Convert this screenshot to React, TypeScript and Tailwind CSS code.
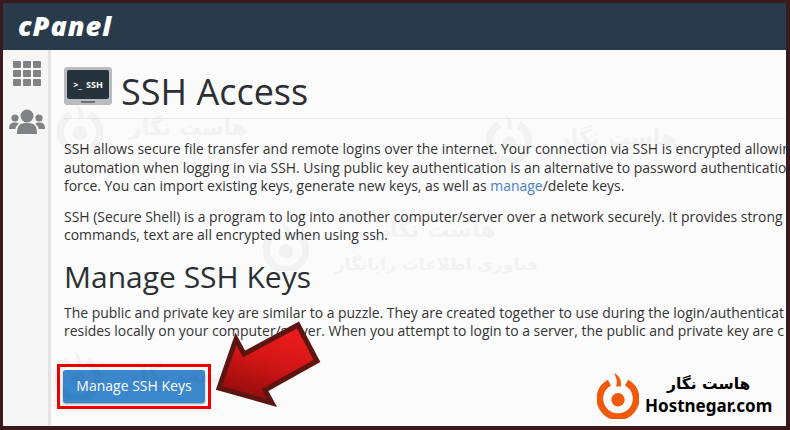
const sans = 'font-["Open_Sans",sans-serif]';

function Ring({ color }: { color: string }) {
  return (
    <svg viewBox="0 0 44 48" className="h-full w-full">
      <path d="M13 11 A19 19 0 1 0 31 11" fill="none" stroke={color} strokeWidth="7" />
      <path d="M18 1 C23 4 26 8 25 15 L20 15 C22 10 20 6 18 1 Z" fill={color} />
      <circle cx="22" cy="29" r="7" fill={color} />
    </svg>
  );
}

function Watermark({ className, tagline }: { className: string; tagline?: boolean }) {
  return (
    <div className={`pointer-events-none absolute flex items-center gap-[26px] opacity-[0.03] ${className}`}>
      <div className="h-[50px] w-[46px]">
        <Ring color="#000" />
      </div>
      <div className='flex flex-col items-center gap-[12px] font-["DejaVu_Sans",sans-serif] whitespace-nowrap'>
        <span className="text-[22px] leading-[24px] font-bold">هاست نگار</span>
        {tagline && <span className="text-[17px] leading-[20px] font-bold">فناوری اطلاعات رایانگار</span>}
      </div>
    </div>
  );
}

function SshIcon() {
  return (
    <div className="flex h-[38px] w-12 shrink-0 flex-col items-center rounded-[3px] bg-[#b9bcbe] px-[3px] pt-[3px]">
      <div className="flex h-[29px] w-full items-center justify-center gap-[4px] rounded-[2px] bg-[#26323c] text-[9px] leading-none font-bold text-white">
        <span>&gt;_</span>
        <span>SSH</span>
      </div>
      <div className="mt-[2px] h-[2px] w-[14px] bg-[#6f7376]" />
    </div>
  );
}

export default function App() {
  return (
    <div className={`relative flex h-[430px] w-[790px] flex-col overflow-hidden border-[3px] border-r-[4px] border-b-[4px] border-[#3a1a1a] bg-[#fbfbfb] ${sans}`}>
      <header className="flex h-[47px] shrink-0 items-center bg-[#293a4a] pb-[3px] pl-[15px]">
        <span className="text-[27px] leading-none font-extrabold tracking-[1px] text-white italic">cPanel</span>
      </header>

      <div className="flex min-h-0 flex-1">
        <aside className="flex w-[48px] shrink-0 flex-col items-center gap-[23px] border-r-[3px] border-[#e4e4e4] bg-[#f6f6f6] pt-[11px] pl-[2px]">
          <div className="grid grid-cols-3 gap-[2px]">
            {Array.from({ length: 9 }).map((_, i) => (
              <div key={i} className="h-[7px] w-[8px] rounded-[1px] bg-[#808285]" />
            ))}
          </div>
          <svg viewBox="0 0 36 26" className="h-[26px] w-[36px]" fill="#808285">
            <circle cx="18" cy="7" r="6.5" />
            <path d="M8 25 C8 16 11 14 18 14 C25 14 28 16 28 25 Z" />
            <circle cx="6" cy="9" r="3.6" />
            <circle cx="30" cy="9" r="3.6" />
            <path d="M0 20 C0 15 2 13.5 6 13.5 C8 13.5 9 14 9.5 15 C7.5 16.5 6.5 18 6.5 20 Z" />
            <path d="M36 20 C36 15 34 13.5 30 13.5 C28 13.5 27 14 26.5 15 C28.5 16.5 29.5 18 29.5 20 Z" />
          </svg>
        </aside>

        <main className="min-w-0 flex-1 overflow-hidden pl-[13px] text-[13.95px] leading-[18.5px] whitespace-nowrap text-[#333]">
          <div className="flex h-[69px] items-start gap-[9px] border-b border-[#ececec] pt-[17px]">
            <SshIcon />
            <h1 className="mt-[7px] text-[36px] leading-none text-[#2c2f33]">SSH Access</h1>
          </div>

          <p className="mt-[21px]">SSH allows secure file transfer and remote logins over the internet. Your connection via SSH is encrypted allowing</p>
          <p>automation when logging in via SSH. Using public key authentication is an alternative to password authentication</p>
          <p>
            force. You can import existing keys, generate new keys, as well as <span className="text-[#4a80c4]">manage</span>/delete keys.
          </p>

          <p className="mt-[12px]">SSH (Secure Shell) is a program to log into another computer/server over a network securely. It provides strong</p>
          <p>commands, text are all encrypted when using ssh.</p>

          <h2 className="mt-[12px] text-[30px] leading-[40px] text-[#2c2f33]">Manage SSH Keys</h2>

          <p className="mt-[7px]">The public and private key are similar to a puzzle. They are created together to use during the login/authenticat</p>
          <p>resides locally on your computer/server. When you attempt to login to a server, the public and private key are c</p>

          <div className="mt-[23px] ml-[-7px] w-fit border-[3px] border-[#f00000] p-[3px]">
            <button className="block h-[33px] w-[142px] rounded-[3px] bg-[#3a87cd] text-[14px] text-white shadow-[0_1px_2px_#999]">Manage SSH Keys</button>
          </div>
        </main>
      </div>

      <Watermark className="top-[100px] left-[54px]" />
      <Watermark className="top-[110px] left-[483px]" />
      <Watermark className="top-[215px] left-[260px]" tagline />
      <Watermark className="top-[347px] left-[52px]" />

      <svg viewBox="0 0 110 90" className="absolute top-[317px] left-[212px] h-[90px] w-[110px]">
        <defs>
          <linearGradient id="arrowFill" x1="0.7" y1="0" x2="0.35" y2="1">
            <stop offset="0" stopColor="#ee1c1c" />
            <stop offset="0.45" stopColor="#d51616" />
            <stop offset="1" stopColor="#8f0c0c" />
          </linearGradient>
        </defs>
        <path
          d="M4 68 L21 19 L29 34 L83 5 L102 41 L50 70 L57 83 Z"
          fill="url(#arrowFill)"
          stroke="#5c1510"
          strokeWidth="5"
          strokeLinejoin="miter"
        />
      </svg>

      <div className="absolute top-[368px] left-[594px] flex items-center gap-[6px]">
        <div className="h-[48px] w-[42px]">
          <Ring color="#f15a0a" />
        </div>
        <div className="flex flex-col items-center leading-none text-black">
          <span className='font-["DejaVu_Sans",sans-serif] text-[15.5px] leading-[22px] font-bold' dir="rtl">هاست نگار</span>
          <span className='font-["Noto_Sans",sans-serif] text-[17px] leading-[22px] font-bold'>Hostnegar.com</span>
        </div>
      </div>
    </div>
  );
}
